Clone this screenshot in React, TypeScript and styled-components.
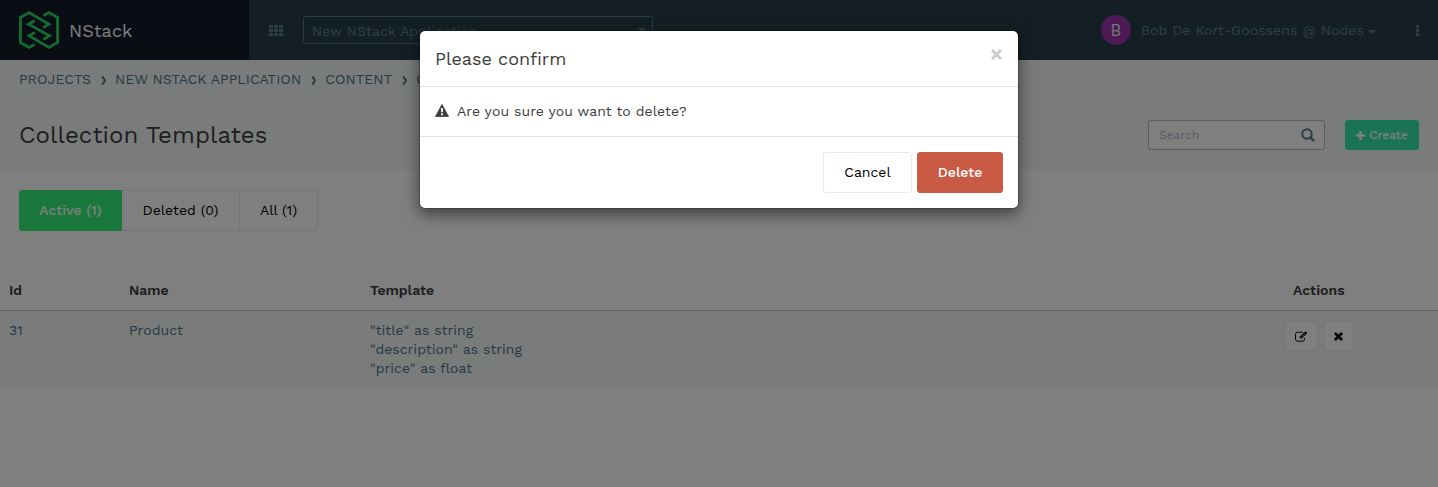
import React from "react";
import styled, { createGlobalStyle } from "styled-components";

const Global = createGlobalStyle`
  *, *::before, *::after { box-sizing: border-box; }
  html, body, #root { height: 100%; }
  body { margin: 0; background: #fff; color: #3c3c3c; font: 14px/19px "Work Sans", Inter, "Liberation Sans", sans-serif; overflow: hidden; }
  button, input { font: inherit; letter-spacing: inherit; }
`;

/* Tracked text; $s is the letter spacing in px. */
const T = styled.span<{ $s?: number }>`
  white-space: nowrap;
  letter-spacing: ${(p) => p.$s ?? 0}px;
`;

const Page = styled.div`
  position: relative;
  height: 100%;
  display: flex;
  flex-direction: column;
`;
const Navbar = styled.header`
  height: 60px;
  flex: none;
  display: flex;
  background: #283e4a;
  color: #587f93;
`;
const Brand = styled.div`
  width: 249px;
  display: flex;
  align-items: center;
  padding-left: 19px;
  gap: 10px;
  background: #141c28;
  color: #fff;
  font-size: 18px;
`;
const NavBody = styled.div`
  flex: 1;
  display: flex;
  align-items: center;
  padding: 0 18px 0 20px;
`;
const Caret = styled.i<{ $w: number }>`
  border: ${(p) => p.$w}px solid transparent;
  border-top-color: currentColor;
  border-bottom: 0;
`;
const AppSelect = styled.div`
  width: 350px;
  height: 28px;
  margin-left: 20px;
  padding: 3px 6px 0 8px;
  display: flex;
  align-items: center;
  justify-content: space-between;
  border: 1px solid #54798c;
  border-radius: 3px;
  ${Caret} { margin-bottom: 3px; }
`;
const User = styled.div`
  margin-left: auto;
  display: flex;
  align-items: center;
  gap: 4px;
  ${Caret} { margin-top: 3px; }
`;
const Avatar = styled.span`
  width: 30px;
  height: 30px;
  margin-right: 6px;
  border-radius: 50%;
  display: grid;
  place-items: center;
  background: #9c35ab;
  color: #e6e6e6;
  font-size: 17px;
`;
const MoreIcon = styled.svg`
  margin-left: 40px;
`;
const Heading = styled.section`
  height: 110px;
  flex: none;
  background: #f4f9f7;
`;
const Crumbs = styled.nav`
  display: flex;
  align-items: center;
  height: 39px;
  padding-left: 19px;
  color: #4e7386;
  svg { margin: 2px 8px 0 10px; }
`;
const TitleRow = styled.div`
  display: flex;
  align-items: center;
  height: 72px;
  padding: 0 19px;
`;
const Title = styled.h1`
  margin: 0 auto 0 0;
  font-size: 24px;
  font-weight: 400;
  line-height: 30px;
`;
const Search = styled.div`
  width: 177px;
  height: 30px;
  padding: 0 9px 0 10px;
  display: flex;
  align-items: center;
  justify-content: space-between;
  background: #fff;
  border: 1px solid #a9bcc6;
  border-radius: 3px;
  color: #a9bcc6;
  font-size: 12px;
`;
const Create = styled.button`
  width: 74px;
  height: 30px;
  margin-left: 20px;
  padding: 0;
  display: flex;
  align-items: center;
  justify-content: center;
  gap: 4px;
  border: 0;
  border-radius: 3px;
  background: #37e6ae;
  color: #fff;
  font-size: 12px;
  font-weight: 500;
`;
const Tabs = styled.div`
  display: flex;
  margin: 20px 0 0 19px;
  height: 41px;
  flex: none;
`;
const Tab = styled.button<{ $w: number; $active?: boolean }>`
  width: ${(p) => p.$w}px;
  padding: 0;
  border: 1px solid ${(p) => (p.$active ? "#36f079" : "#e6ecf0")};
  border-left-width: ${(p) => (p.$active ? 1 : 0)}px;
  background: ${(p) => (p.$active ? "#36f079" : "#fff")};
  color: ${(p) => (p.$active ? "#fff" : "#000")};
  font-weight: ${(p) => (p.$active ? 500 : 400)};
  &:first-child { border-radius: 3px 0 0 3px; }
  &:last-child { border-radius: 0 3px 3px 0; }
`;
const Row = styled.div<{ $head?: boolean }>`
  display: grid;
  grid-template-columns: 120px 241px 914px 1fr;
  flex: none;
  height: ${(p) => (p.$head ? 40 : 77)}px;
  margin-top: ${(p) => (p.$head ? 40 : 0)}px;
  padding: 10px 0 0 9px;
  border-bottom: ${(p) => (p.$head ? "1px solid #b4c5cc" : "0")};
  background: ${(p) => (p.$head ? "#fff" : "#f3f8f7")};
  color: ${(p) => (p.$head ? "#3c3c3c" : "#4e7386")};
  font-weight: ${(p) => (p.$head ? 600 : 400)};
`;
const Lines = styled.div`
  display: flex;
  flex-direction: column;
`;
const ActionHead = styled.div`
  padding-left: 9px;
`;
const Actions = styled.div`
  display: flex;
  gap: 5px;
`;
const IconButton = styled.button<{ $w: number }>`
  width: ${(p) => p.$w}px;
  height: 30px;
  padding: 0;
  display: grid;
  place-items: center;
  background: #fff;
  border: 1px solid #e6ecf0;
  border-radius: 3px;
  color: #111;
`;
const Backdrop = styled.div`
  position: absolute;
  inset: 0;
  background: rgba(0, 0, 0, 0.5);
  display: flex;
  justify-content: center;
  align-items: flex-start;
  padding-top: 30px;
`;
const Dialog = styled.div`
  width: 600px;
  height: 179px;
  background: #fff;
  background-clip: padding-box;
  border: 1px solid rgba(0, 0, 0, 0.2);
  border-radius: 6px;
  box-shadow: 0 5px 15px rgba(0, 0, 0, 0.5);
`;
const DialogHead = styled.div`
  height: 56px;
  padding: 0 15px;
  display: flex;
  justify-content: space-between;
  align-items: center;
  border-bottom: 1px solid #e2e2e2;
  font-size: 18px;
  svg { margin: 0 1px 8px 0; }
`;
const DialogBody = styled.div`
  height: 50px;
  padding: 0 15px;
  display: flex;
  align-items: center;
  gap: 8px;
  border-bottom: 1px solid #e2e2e2;
  svg { margin-bottom: 2px; }
`;
const DialogFoot = styled.div`
  padding: 15px;
  display: flex;
  justify-content: flex-end;
  gap: 5px;
`;
const Button = styled.button<{ $danger?: boolean }>`
  width: ${(p) => (p.$danger ? 86 : 89)}px;
  height: 41px;
  padding: 0;
  border-radius: 3px;
  border: 1px solid ${(p) => (p.$danger ? "#c95b44" : "#e6ecf0")};
  background: ${(p) => (p.$danger ? "#c95b44" : "#fff")};
  color: ${(p) => (p.$danger ? "#fff" : "#000")};
  font-weight: ${(p) => (p.$danger ? 500 : 400)};
`;

const Logo = () => (
  <svg width="40" height="38" viewBox="0 0 40 38" fill="none" stroke="#25d95f" strokeWidth="2.8">
    <path d="M15.5 33.4 10 36.4 1.4 31.4V6.6L10 1.6 30 13.2 24 16.6" />
    <path d="M24.5 4.6 30 1.6 38.6 6.6V31.4L30 36.4 10 24.8 16 21.4" />
    <path d="M15.5 9.8 9.5 13.2 30.5 24.8 24.5 28.2" />
  </svg>
);
const Grid = () => (
  <svg width="14" height="11" fill="currentColor">
    {[0, 4, 8].map((y) => [0, 5, 10].map((x) => <rect key={`${x}-${y}`} x={x} y={y} width="4" height="3" />))}
  </svg>
);
const Chevron = () => (
  <svg width="6" height="9" fill="none" stroke="currentColor" strokeWidth="2">
    <path d="M1.2.5C2.3 2 3.8 3.4 3.8 4.5S2.3 7 1.2 8.5" />
  </svg>
);
const Cross = ({ size, width }: { size: number; width: number }) => (
  <svg width={size} height={size} viewBox="0 0 10 10" stroke="currentColor" strokeWidth={width}>
    <path d="M1 1 9 9M9 1 1 9" />
  </svg>
);

export default function App() {
  return (
    <Page>
      <Global />
      <Navbar>
        <Brand><Logo /><T $s={0.1}>NStack</T></Brand>
        <NavBody>
          <Grid />
          <AppSelect><T $s={0.09}>New NStack Application</T><Caret $w={4} /></AppSelect>
          <User>
            <Avatar>B</Avatar>
            <T $s={0.09}>Bob De Kort-Goossens @ Nodes</T>
            <Caret $w={4} />
          </User>
          <MoreIcon width="4" height="11" fill="currentColor">
            <rect width="3" height="3" /><rect y="4" width="3" height="3" /><rect y="8" width="3" height="3" />
          </MoreIcon>
        </NavBody>
      </Navbar>
      <Heading>
        <Crumbs>
          <T $s={0.07}>PROJECTS</T><Chevron />
          <T $s={0.07}>NEW NSTACK APPLICATION</T><Chevron />
          <T $s={0.07}>CONTENT</T><Chevron />
          <T $s={0.07}>COLLECTION TEMPLATES</T>
        </Crumbs>
        <TitleRow>
          <Title><T $s={0.09}>Collection Templates</T></Title>
          <Search>
            <T>Search</T>
            <svg width="14" height="14" fill="none" stroke="#54798c" strokeWidth="2"><circle cx="6" cy="6" r="4.7" /><path d="m9.4 9.4 3.6 3.6" strokeWidth="2.4" /></svg>
          </Search>
          <Create>
            <svg width="9" height="9" stroke="currentColor" strokeWidth="2.6"><path d="M4.5 0v9M0 4.5h9" /></svg>
            <T>Create</T>
          </Create>
        </TitleRow>
      </Heading>
      <Tabs>
        <Tab $w={103} $active><T>Active (1)</T></Tab>
        <Tab $w={118}><T $s={0.05}>Deleted (0)</T></Tab>
        <Tab $w={78}><T>All (1)</T></Tab>
      </Tabs>
      <Row $head>
        <T>Id</T><T>Name</T><T>Template</T><ActionHead><T>Actions</T></ActionHead>
      </Row>
      <Row>
        <T $s={0.1}>31</T>
        <T $s={0.07}>Product</T>
        <Lines>
          <T $s={0.04}>"title" as string</T>
          <T $s={0.04}>"description" as string</T>
          <T $s={0.04}>"price" as float</T>
        </Lines>
        <Actions>
          <IconButton $w={34}>
            <svg width="13" height="11" fill="none" stroke="currentColor"><path d="M8 1.2H2.5a2 2 0 0 0-2 2v5a2 2 0 0 0 2 2h5a2 2 0 0 0 2-2V7" /><path d="M5.2 7 11.4 1.4" strokeWidth="2.8" /><path d="m6.2 6.4 4-3.7" stroke="#fff" strokeWidth=".6" /></svg>
          </IconButton>
          <IconButton $w={31}><Cross size={9} width={3} /></IconButton>
        </Actions>
      </Row>
      <Backdrop>
        <Dialog role="dialog">
          <DialogHead><T>Please confirm</T><svg width="11" height="11" stroke="#ccc" strokeWidth="2.9"><path d="m1 1 9 9M10 1l-9 9" /></svg></DialogHead>
          <DialogBody>
            <svg width="14" height="13" viewBox="0 0 14 13"><path d="M7 .3 13.7 12.7H.3Z" fill="#3c3c3c" stroke="#3c3c3c" strokeWidth=".6" strokeLinejoin="round" /><path d="M7 4v4.3M7 9.3v2" stroke="#fff" strokeWidth="1.8" /></svg>
            <T $s={0.09}>Are you sure you want to delete?</T>
          </DialogBody>
          <DialogFoot>
            <Button><T>Cancel</T></Button>
            <Button $danger><T>Delete</T></Button>
          </DialogFoot>
        </Dialog>
      </Backdrop>
    </Page>
  );
}
